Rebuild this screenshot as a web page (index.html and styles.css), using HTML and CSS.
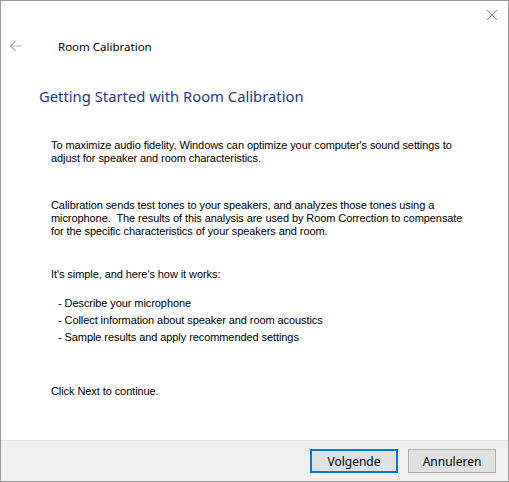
FILE: index.html
```html
<!DOCTYPE html>
<html>
<head>
    <link rel="stylesheet" href="styles.css">
</head>
<body>

<div class="window">
    <div class="titlebar">
        <svg class="close" width="12" height="12" viewBox="0 0 12 12">
            <path d="M1 1 L11 11 M11 1 L1 11" stroke="#8a8a8a" stroke-width="1" fill="none"/>
        </svg>
    </div>
    <div class="header">
        <svg class="back" width="14" height="12" viewBox="0 0 14 12">
            <path d="M13 6 H1.5 M6.5 1 L1.5 6 L6.5 11" stroke="#b4b4b4" stroke-width="1.2" fill="none"/>
        </svg>
        <span class="title">Room Calibration</span>
    </div>

    <div class="content">
        <h1>Getting Started with Room Calibration</h1>
        <p class="p1">To maximize audio fidelity, Windows can optimize your computer's sound settings to<br>adjust for speaker and room characteristics.</p>
        <p class="p2">Calibration sends test tones to your speakers, and analyzes those tones using a<br>microphone.&nbsp; The results of this analysis are used by Room Correction to compensate<br>for the specific characteristics of your speakers and room.</p>
        <p class="p3">It's simple, and here's how it works:</p>
        <ul class="steps">
            <li>- Describe your microphone</li>
            <li>- Collect information about speaker and room acoustics</li>
            <li>- Sample results and apply recommended settings</li>
        </ul>
        <p class="p4">Click Next to continue.</p>
    </div>

    <div class="footer">
        <button class="btn primary">Volgende</button>
        <button class="btn">Annuleren</button>
    </div>
</div>

</body>
</html>
```

FILE: styles.css
```css
body {
    margin: 0;
    padding: 0;
    background: #ffffff;
}
.window {
    width: 509px;
    height: 482px;
    box-sizing: border-box;
    border: 1px solid #9a9a9a;
    background: #ffffff;
    display: flex;
    flex-direction: column;
}
.titlebar {
    height: 29px;
    display: flex;
    justify-content: flex-end;
    align-items: flex-start;
    padding: 8px 10px 0 0;
    box-sizing: border-box;
}
.header {
    display: flex;
    align-items: center;
    height: 32px;
    padding-left: 8px;
}
.back {
    margin-right: 35px;
}
.title {
    font-family: "Noto Sans", sans-serif;
    font-size: 11.5px;
    color: #000;
}
.content {
    flex: 1;
    padding: 0 20px 0 50px;
    font-family: "Liberation Sans", sans-serif;
    font-size: 11px;
    letter-spacing: -0.08px;
    line-height: 13px;
    color: #000;
}
h1 {
    font-family: "Noto Sans", sans-serif;
    font-weight: normal;
    font-size: 14.8px;
    letter-spacing: 0;
    color: #1e3c8c;
    margin: 24px 0 0 -12px;
    line-height: 20px;
}
.content p {
    margin: 0;
}
.p1 {
    padding-top: 33px;
}
.p2 {
    padding-top: 34px;
}
.p3 {
    padding-top: 30px;
}
.steps {
    list-style: none;
    margin: 14px 0 0 7px;
    padding: 0;
}
.steps li {
    line-height: 17px;
}
.p4 {
    padding-top: 39px;
}
.footer {
    height: 40px;
    background: #f0f0f0;
    display: flex;
    justify-content: flex-end;
    align-items: center;
    gap: 10px;
    padding-right: 12px;
    border-top: 1px solid #e6e6e6;
}
.btn {
    width: 88px;
    height: 24px;
    font-family: "Noto Sans", sans-serif;
    font-size: 12px;
    background: #e1e1e1;
    border: 1px solid #adadad;
    color: #000;
    padding: 0;
}
.btn.primary {
    border: 2px solid #0078d7;
}
```
